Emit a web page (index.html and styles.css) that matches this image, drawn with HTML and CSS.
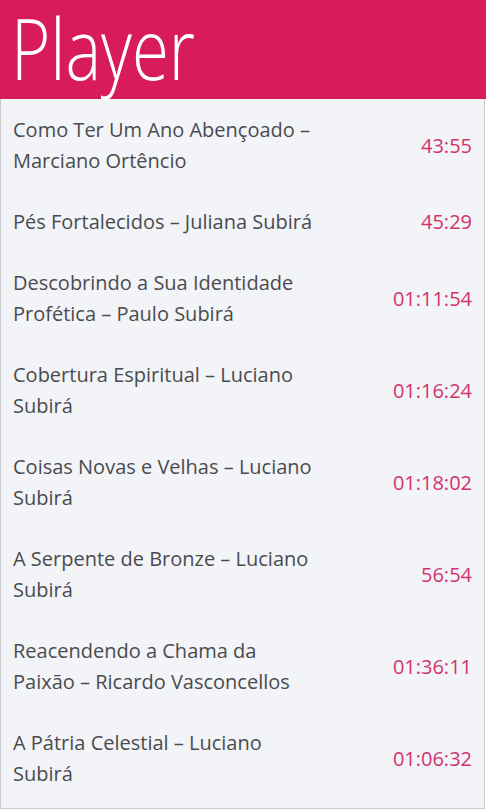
FILE: index.html
```html
<!DOCTYPE html>
<html lang="pt">
<head>
<meta charset="utf-8">
<title>Player</title>
<link rel="stylesheet" href="styles.css">
</head>
<body>
<header class="header"><h1 class="title">Player</h1></header>
<main class="list">
  <div class="item"><div class="name">Como Ter Um Ano Abençoado – Marciano Ortêncio</div><div class="time">43:55</div></div>
  <div class="item"><div class="name">Pés Fortalecidos – Juliana Subirá</div><div class="time">45:29</div></div>
  <div class="item"><div class="name">Descobrindo a Sua Identidade Profética – Paulo Subirá</div><div class="time">01:11:54</div></div>
  <div class="item"><div class="name">Cobertura Espiritual – Luciano Subirá</div><div class="time">01:16:24</div></div>
  <div class="item"><div class="name">Coisas Novas e Velhas – Luciano Subirá</div><div class="time">01:18:02</div></div>
  <div class="item"><div class="name">A Serpente de Bronze – Luciano Subirá</div><div class="time">56:54</div></div>
  <div class="item"><div class="name">Reacendendo a Chama da Paixão – Ricardo Vasconcellos</div><div class="time">01:36:11</div></div>
  <div class="item"><div class="name">A Pátria Celestial – Luciano Subirá</div><div class="time">01:06:32</div></div>
</main>
</body>
</html>
```
FILE: styles.css
```css
html, body {
  margin: 0;
  padding: 0;
  background: #ffffff;
}
body {
  width: 486px;
  height: 810px;
  overflow: hidden;
  font-family: "Open Sans", "Noto Sans", sans-serif;
}
.header {
  height: 99px;
  background: #d81b5a;
  padding: 0 0 0 11px;
  box-sizing: border-box;
}
.title {
  display: inline-block;
  margin: 0;
  font-family: "Open Sans", sans-serif;
  font-weight: 340;
  font-size: 84px;
  line-height: 95px;
  color: #ffffff;
  transform: scaleX(0.8);
  transform-origin: left center;
}
.list {
  width: 483px;
  height: 709px;
  background: #f2f4f7;
  border: 1px solid #c8cacd;
  border-top: none;
  box-sizing: content-box;
}
.item {
  display: flex;
  align-items: center;
  justify-content: space-between;
  padding: 15px 12px 15px 12px;
}
.name {
  width: 302px;
  font-size: 20px;
  line-height: 31px;
  color: #4b4b4f;
}
.time {
  font-size: 20px;
  line-height: 31px;
  color: #d2336b;
}
```
